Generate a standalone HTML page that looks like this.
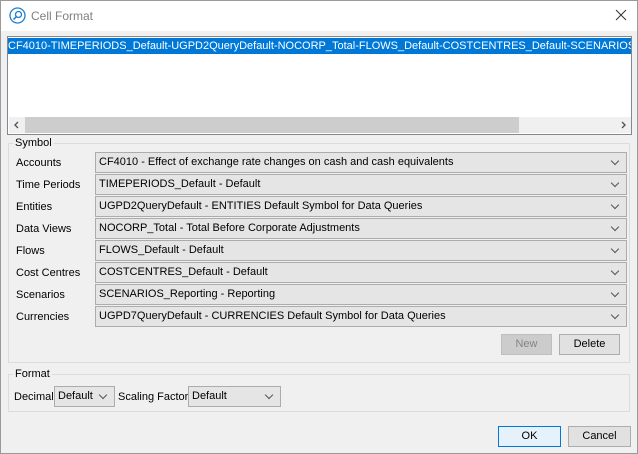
<!DOCTYPE html>
<html><head><style>
*{box-sizing:border-box}
body{margin:0;width:638px;height:454px;background:#f0f0f0;font-family:"Liberation Sans",sans-serif;font-size:11px;color:#000;position:relative;overflow:hidden}
.abs{position:absolute}
.frame{position:absolute;left:0;top:0;width:638px;height:454px;border:1px solid #9a9a9a}
.title{left:1px;top:1px;width:636px;height:30px;background:#fff}
.list{left:7px;top:36px;width:625px;height:99px;background:#fff;border:1px solid #828790}
.sel{left:0;top:1px;height:16px;width:623px;background:#0078d7;color:#fff;font-size:11px;line-height:16px;white-space:nowrap;overflow:hidden}
.hs{left:1px;bottom:1px;width:622px;height:16px;background:#f0f0f0}
.group{border:1px solid #dcdcdc;}
.lbl{font-size:11px;line-height:14px}
.combo{position:absolute;left:95px;width:532px;height:21px;background:#e5e5e5;border:1px solid #acacac;line-height:19px;padding-left:3px;font-size:11px;white-space:nowrap}
.combo:after,.sc:after{content:"";position:absolute;right:8px;top:5px;width:5px;height:5px;border-right:1px solid #555;border-bottom:1px solid #555;transform:rotate(45deg)}
.btn{position:absolute;height:21px;background:#e1e1e1;border:1px solid #adadad;text-align:center;line-height:19px;font-size:11px}
.sc{position:absolute;height:21px;background:#e5e5e5;border:1px solid #acacac;line-height:19px;padding-left:3px}
</style></head><body>
<div class="frame"></div>
<div class="abs title">
<svg class="abs" style="left:8px;top:6px" width="17" height="17" viewBox="0 0 17 17"><circle cx="8.5" cy="8.5" r="7.5" fill="none" stroke="#1e7fd0" stroke-width="1.3"/><circle cx="9.5" cy="7.5" r="3" fill="none" stroke="#1e7fd0" stroke-width="1.3"/><line x1="7.3" y1="9.7" x2="4.5" y2="12.5" stroke="#1e7fd0" stroke-width="1.5"/></svg>
<div class="abs" style="left:30px;top:8px;font-size:12px;color:#808080">Cell Format</div>
<svg class="abs" style="left:614px;top:8px" width="12" height="12" viewBox="0 0 12 12"><path d="M1 1L11 11M11 1L1 11" stroke="#333" stroke-width="1"/></svg>
</div>
<div class="abs list">
<div class="abs sel">CF4010-TIMEPERIODS_Default-UGPD2QueryDefault-NOCORP_Total-FLOWS_Default-COSTCENTRES_Default-SCENARIOS_Reporting-CURRENCIES</div>
<div class="abs hs">
<svg class="abs" style="left:4px;top:4px" width="8" height="8" viewBox="0 0 8 8"><path d="M5 1L2 4L5 7" stroke="#555" stroke-width="1.4" fill="none"/></svg>
<div class="abs" style="left:16px;top:0;width:494px;height:16px;background:#cdcdcd"></div>
<svg class="abs" style="right:4px;top:4px" width="8" height="8" viewBox="0 0 8 8"><path d="M3 1L6 4L3 7" stroke="#555" stroke-width="1.4" fill="none"/></svg>
</div>
</div>
<div class="abs group" style="left:8px;top:143px;width:622px;height:220px"></div>
<div class="abs lbl" style="left:13px;top:136px;background:#f0f0f0;padding:0 2px">Symbol</div>
<div class="combo" style="top:152px">CF4010 - Effect of exchange rate changes on cash and cash equivalents</div>
<div class="combo" style="top:174px">TIMEPERIODS_Default - Default</div>
<div class="combo" style="top:196px">UGPD2QueryDefault - ENTITIES Default Symbol for Data Queries</div>
<div class="combo" style="top:218px">NOCORP_Total - Total Before Corporate Adjustments</div>
<div class="combo" style="top:240px">FLOWS_Default - Default</div>
<div class="combo" style="top:262px">COSTCENTRES_Default - Default</div>
<div class="combo" style="top:284px">SCENARIOS_Reporting - Reporting</div>
<div class="combo" style="top:306px">UGPD7QueryDefault - CURRENCIES Default Symbol for Data Queries</div>
<div class="abs lbl" style="left:16px;top:156px">Accounts</div>
<div class="abs lbl" style="left:16px;top:178px">Time Periods</div>
<div class="abs lbl" style="left:16px;top:200px">Entities</div>
<div class="abs lbl" style="left:16px;top:222px">Data Views</div>
<div class="abs lbl" style="left:16px;top:244px">Flows</div>
<div class="abs lbl" style="left:16px;top:266px">Cost Centres</div>
<div class="abs lbl" style="left:16px;top:288px">Scenarios</div>
<div class="abs lbl" style="left:16px;top:310px">Currencies</div>
<div class="btn" style="left:501px;top:334px;width:51px;background:#cccccc;border-color:#bfbfbf;color:#838383">New</div>
<div class="btn" style="left:559px;top:334px;width:61px">Delete</div>
<div class="abs group" style="left:8px;top:374px;width:622px;height:38px"></div>
<div class="abs lbl" style="left:13px;top:367px;background:#f0f0f0;padding:0 2px">Format</div>
<div class="abs lbl" style="left:14px;top:390px">Decimal</div>
<div class="sc" style="left:54px;top:386px;width:61px">Default</div>
<div class="abs lbl" style="left:118px;top:390px">Scaling Factor</div>
<div class="sc" style="left:188px;top:386px;width:93px">Default</div>
<div class="btn" style="left:498px;top:426px;width:63px;background:#e5f1fb;border-color:#0078d7">OK</div>
<div class="btn" style="left:568px;top:426px;width:63px">Cancel</div>
</body></html>
